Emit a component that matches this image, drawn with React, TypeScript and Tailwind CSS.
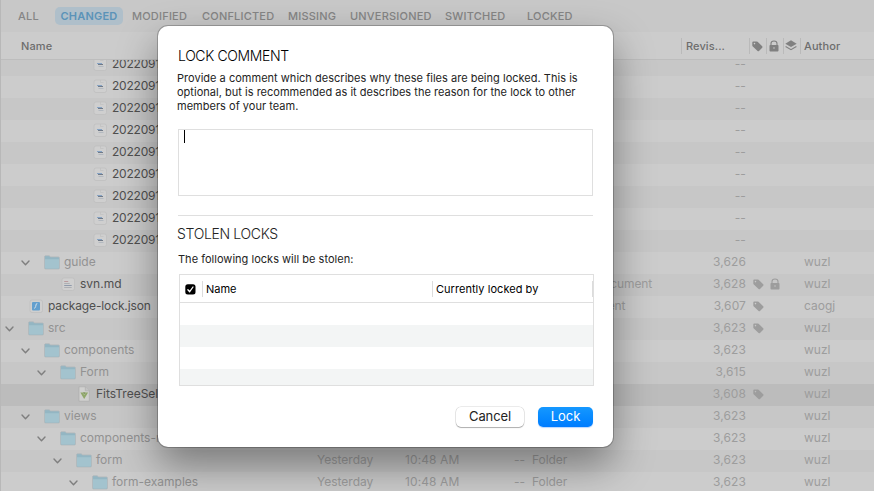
import React from "react";

type Kind = "thumb" | "md" | "json" | "vue" | "folder";

interface Row {
  pad: string;
  kind: Kind;
  name: string;
  nameClass?: string;
  modified?: boolean;
  type?: string;
  rev?: string;
  tag?: boolean;
  lock?: boolean;
  author?: string;
  selected?: boolean;
}

const thumb: Row = { pad: "pl-[92px]", kind: "thumb", name: "2022091", nameClass: "tracking-[-0.22px]" };

const rows: Row[] = [
  ...Array.from({ length: 9 }, () => thumb),
  { pad: "pl-5", kind: "folder", name: "guide", rev: "3,626", author: "wuzl" },
  { pad: "pl-[60px]", kind: "md", name: "svn.md", type: "Markdown Document", rev: "3,628", tag: true, lock: true, author: "wuzl" },
  { pad: "pl-[28px]", kind: "json", name: "package-lock.json", nameClass: "tracking-[-0.12px]", type: "JSON Document", rev: "3,607", tag: true, author: "caogj" },
  { pad: "pl-1", kind: "folder", name: "src", rev: "3,623", tag: true, author: "wuzl" },
  { pad: "pl-5", kind: "folder", name: "components", rev: "3,623", author: "wuzl" },
  { pad: "pl-9", kind: "folder", name: "Form", rev: "3,615", author: "wuzl" },
  { pad: "pl-[76px]", kind: "vue", name: "FitsTreeSel", rev: "3,608", tag: true, author: "wuzl", selected: true },
  { pad: "pl-5", kind: "folder", name: "views", rev: "3,623", author: "wuzl" },
  { pad: "pl-9", kind: "folder", name: "components-r", rev: "3,623", author: "wuzl" },
  { pad: "pl-[52px]", kind: "folder", name: "form", modified: true, type: "Folder", rev: "3,623", author: "wuzl" },
  { pad: "pl-[68px]", kind: "folder", name: "form-examples", modified: true, type: "Folder", rev: "3,623", author: "wuzl" },
];

const tabs = [
  { label: "ALL", cls: "ml-[18px] w-[37px]" },
  { label: "CHANGED", active: true, cls: "" },
  { label: "MODIFIED", cls: "ml-[9px] w-[70px]" },
  { label: "CONFLICTED", cls: "w-[86px]" },
  { label: "MISSING", cls: "w-[62px]" },
  { label: "UNVERSIONED", cls: "w-[95px]" },
  { label: "SWITCHED", cls: "w-[82px]" },
  { label: "LOCKED", cls: "" },
];

function TagIcon() {
  return (
    <svg width="11" height="11" viewBox="0 0 11 11" fill="currentColor">
      <path
        fillRule="evenodd"
        d="M.3 1.4Q.3.4 1.3.4h3.3q.6 0 1 .4l4.6 4.5q.7.7 0 1.4L7 10q-.7.7-1.4 0L.8 5.4q-.5-.4-.5-1zM2.5 1.8a.8.8 0 1 0 0 1.6.8.8 0 0 0 0-1.6z"
      />
    </svg>
  );
}

function LockIcon() {
  return (
    <svg width="10" height="12" viewBox="0 0 10 12">
      <path d="M2 6V3.6Q2 1 5 1t3 2.6V6" fill="none" stroke="currentColor" strokeWidth="1.1" />
      <path
        fillRule="evenodd"
        fill="currentColor"
        d="M1.3 5h7.4q.8 0 .8.8v4.7q0 .9-.9.9H1.4q-.9 0-.9-.9V5.8q0-.8.8-.8zM4.6 6.900v2.200h.8V6.900z"
      />
    </svg>
  );
}

function LayersIcon() {
  return (
    <svg width="12" height="11" viewBox="0 0 12 11">
      <path d="M6 .3 11.700 3.700 6 7.100.3 3.700z" fill="currentColor" />
      <path d="M.6 6.500 6 9.700l5.400-3.200" fill="none" stroke="currentColor" strokeWidth="1.100" />
    </svg>
  );
}

function Chevron() {
  return (
    <svg className="mt-px" width="11" height="8" viewBox="0 0 11 8" fill="none" stroke="#7f7f7f" strokeWidth="1.400" strokeLinecap="round" strokeLinejoin="round">
      <path d="M2 2l3.500 3.700L9 2" />
    </svg>
  );
}

function FolderIcon() {
  return (
    <svg className="mt-px ml-[13px]" width="16" height="15" viewBox="0 0 16 15">
      <path d="M.5 2Q.5.700 1.700.7h3.400l1.500 1.200h7.700q1.200 0 1.200 1.200v9.700q0 1.200-1.200 1.200H1.700q-1.200 0-1.200-1.200z" fill="#93b6c3" stroke="#b2b9bb" strokeWidth=".8" />
      <path d="M1 4.200h14v8.300q0 1-1 1H2q-1 0-1-1z" fill="#a3c3ce" />
    </svg>
  );
}

function FileIcon({ kind }: { kind: Kind }) {
  const vue = kind === "vue";
  return (
    <svg width="16" height="16" viewBox="0 0 16 16">
      {vue ? (
        <path d="M3 .8h6.300L13.300 4.800v10.400H3z" fill="#d0d0cf" stroke="#aaa" strokeWidth=".6" />
      ) : (
        <rect x="2" y="2" width="12.500" height="12.500" rx="2" fill="#cfcfcf" stroke="#bdbdbd" strokeWidth=".7" />
      )}
      {kind === "thumb" && (
        <>
          <path d="M8.500 2v2.500h3" stroke="#bfbfbf" strokeWidth=".7" fill="none" />
          <path d="M5 7.500h5" stroke="#86a3c4" strokeWidth="1" />
          <path d="M6 8.500h5" stroke="#707a88" strokeWidth="1" />
          <path d="M6.500 10.500h5" stroke="#b3b9c0" strokeWidth="1" />
        </>
      )}
      {kind === "md" && (
        <>
          <path d="M4.200 5.500h4" stroke="#b99a9d" strokeWidth="1" />
          <path d="M4.200 7.500h5.500M4.200 11.500h7.500" stroke="#adafb3" strokeWidth="1" />
          <path d="M4.200 9.500h7.500" stroke="#8f9aab" strokeWidth="1" />
        </>
      )}
      {kind === "json" && (
        <>
          <rect x="4" y="4" width="8" height="8.500" rx="1" fill="#639fce" />
          <path d="M9.300 5.500q-1.300 0-1.300 1.500t-1.500 3.500" fill="none" stroke="#d6e0e8" strokeWidth="1" />
        </>
      )}
      {vue && (
        <>
          <path d="M9.300.8v4h4" fill="#c4c4c4" stroke="#aaa" strokeWidth=".6" />
          <path d="M4.300 6.500h7.800L8.200 13z" fill="#8fa76a" />
          <path d="M6.500 6.500h3.400L8.200 9.300z" fill="#b7c49f" />
          <path d="M7 6.500h2.400l-1.200 1.700z" fill="#74875a" />
        </>
      )}
    </svg>
  );
}

function FileRow({ row, index }: { row: Row; index: number }) {
  const folder = row.kind === "folder";
  const bg = row.selected ? "bg-[#bcbcbc]" : index % 2 ? "bg-[#cccccc]" : "bg-[#c7c7c7]";
  return (
    <div className={`flex h-[22px] shrink-0 items-center pb-[2px] text-[12px] leading-5 text-[#9d9d9d] ${bg}`}>
      <div className={`-ml-px flex w-[316px] shrink-0 items-center ${row.pad}`}>
        {folder ? (
          <>
            <Chevron />
            <FolderIcon />
          </>
        ) : (
          <FileIcon kind={row.kind} />
        )}
        <span className={`ml-1 whitespace-nowrap ${folder ? "text-[#929292]" : "text-[#4f4f4f]"} ${row.nameClass ?? ""}`}>{row.name}</span>
      </div>
      <div className="w-[88px] shrink-0 pl-px">{row.modified && "Yesterday"}</div>
      <div className="w-[108px] shrink-0 pl-px tracking-[0.1px]">{row.modified && "10:48 AM"}</div>
      <div className="w-5 shrink-0 pl-[2px]">{row.modified && "--"}</div>
      <div className="w-[148px] shrink-0 tracking-[-0.08px] whitespace-nowrap">{row.type}</div>
      <div className="w-[66px] shrink-0 text-right tracking-[0.1px]">{row.rev ?? "--"}</div>
      <div className="ml-[7px] w-[17px]">{row.tag && <TagIcon />}</div>
      <div className="w-[34px]">{row.lock && <LockIcon />}</div>
      <div>{row.author}</div>
    </div>
  );
}

function Browser() {
  return (
    <div className="flex h-full flex-col border-l border-[#b8b8b8] bg-[#c8c8c8]">
      <div className="-ml-px flex h-8 shrink-0 items-center text-[11px] font-medium tracking-[0.2px] text-[#858585]">
        {tabs.map((t) =>
          t.active ? (
            <div key={t.label} className="flex h-[18px] w-[68px] items-center justify-center rounded-[5px] bg-[#afbfca] font-semibold text-[#5b93b8]">
              {t.label}
            </div>
          ) : (
            <div key={t.label} className={t.cls}>
              {t.label}
            </div>
          ),
        )}
      </div>
      <div className="flex h-7 shrink-0 items-center border-b border-[#bdbdbd] bg-[#cccccc] text-[11px] font-medium tracking-[0.1px] text-[#6c6c6c]">
        <div className="-ml-px w-[681px] pt-px pl-[21px]">Name</div>
        <div className="flex h-4 w-[68px] items-center border-l border-[#bababa] pt-[2px] pl-1">Revis...</div>
        <div className="flex h-4 w-[17px] items-center border-l border-[#bababa] pt-px pl-[2px] text-[#808080]">
          <TagIcon />
        </div>
        <div className="flex h-4 w-[17px] items-center border-l border-[#bababa] pl-[2px] text-[#808080]">
          <LockIcon />
        </div>
        <div className="flex h-4 w-[17px] items-center border-l border-[#bababa] pl-px text-[#808080]">
          <LayersIcon />
        </div>
        <div className="flex h-4 items-center border-l border-[#bababa] pt-[2px] pl-[3px]">Author</div>
      </div>
      <div className="min-h-0 flex-1 overflow-hidden">
        <div className="-mt-[6px] flex flex-col">
          {rows.map((r, i) => (
            <FileRow key={i} row={r} index={i} />
          ))}
        </div>
      </div>
    </div>
  );
}

function LockDialog() {
  return (
    <div className="absolute top-[26px] left-[158px] flex h-[421px] w-[455px] flex-col rounded-[10px] bg-white px-5 text-[11px] text-[#232323] shadow-[0_0_0_1px_rgba(0,0,0,0.22),0_18px_40px_rgba(0,0,0,0.4)]">
      <h1 className="mt-5 text-[14px] leading-5 font-light tracking-[-0.38px] text-black">LOCK COMMENT</h1>
      <p className="mt-[5px] -ml-px leading-[14px] tracking-[0.02px] whitespace-nowrap">
        Provide a comment which describes why these files are being locked. This is
        <br />
        optional, but is recommended as it describes the reason for the lock to other
        <br />
        members of your team.
      </p>
      <div className="mt-[16px] h-[67px] border border-[#dfdfdf] pl-[5px]">
        <div className="h-[13px] w-px bg-black" />
      </div>
      <div className="mt-[19px] h-px shrink-0 bg-[#dfdfdf]" />
      <h2 className="mt-2 -ml-px text-[14px] leading-5 font-light tracking-[-0.34px]">STOLEN LOCKS</h2>
      <p className="mt-2 leading-[14px] tracking-[0.02px]">The following locks will be stolen:</p>
      <div className="mt-2 -mr-px ml-px flex h-[112px] shrink-0 flex-col border border-[#dfdfdf]">
        <div className="flex h-7 shrink-0 items-center border-b border-[#dfdfdf] text-black">
          <div className="flex w-[22px] pt-px pl-[5px]">
            <svg width="11" height="11" viewBox="0 0 11 11">
              <rect x=".3" y=".3" width="10.200" height="10.200" rx="2.500" fill="#000" />
              <path d="M2.900 5.700l1.800 2L8 3" fill="none" stroke="#fff" strokeWidth="1.300" strokeLinecap="round" strokeLinejoin="round" />
            </svg>
          </div>
          <div className="flex h-4 w-[230px] items-center border-l border-[#dcdcdc] pt-[2px] pl-[3px]">Name</div>
          <div className="flex h-4 w-40 items-center border-l border-[#dcdcdc] pt-[2px] pl-[3px] tracking-[0.04px]">Currently locked by</div>
          <div className="h-4 w-px bg-[#dcdcdc]" />
        </div>
        <div className="h-[22px] shrink-0" />
        <div className="h-[22px] shrink-0 bg-[#f3f5f5]" />
        <div className="h-[22px] shrink-0" />
        <div className="flex-1 bg-[#f3f5f5]" />
      </div>
      <div className="mt-[21px] flex justify-end text-[13px]">
        <button className="mr-[14px] h-5 w-[68px] rounded-[5px] bg-white pb-px leading-[19px] tracking-[-0.1px] text-[#232323] shadow-[0_0_0_0.5px_rgba(0,0,0,0.16),0_1px_1px_rgba(0,0,0,0.26)]">Cancel</button>
        <button className="h-5 w-[55px] rounded-[5px] bg-linear-to-b from-[#1598ff] to-[#007cff] pb-px leading-[19px] text-white shadow-[0_1px_1px_rgba(0,110,255,0.28)]">Lock</button>
      </div>
    </div>
  );
}

export default function App() {
  return (
    <div className="relative h-[491px] w-[874px] overflow-hidden font-['Inter',sans-serif]">
      <Browser />
      <LockDialog />
    </div>
  );
}
